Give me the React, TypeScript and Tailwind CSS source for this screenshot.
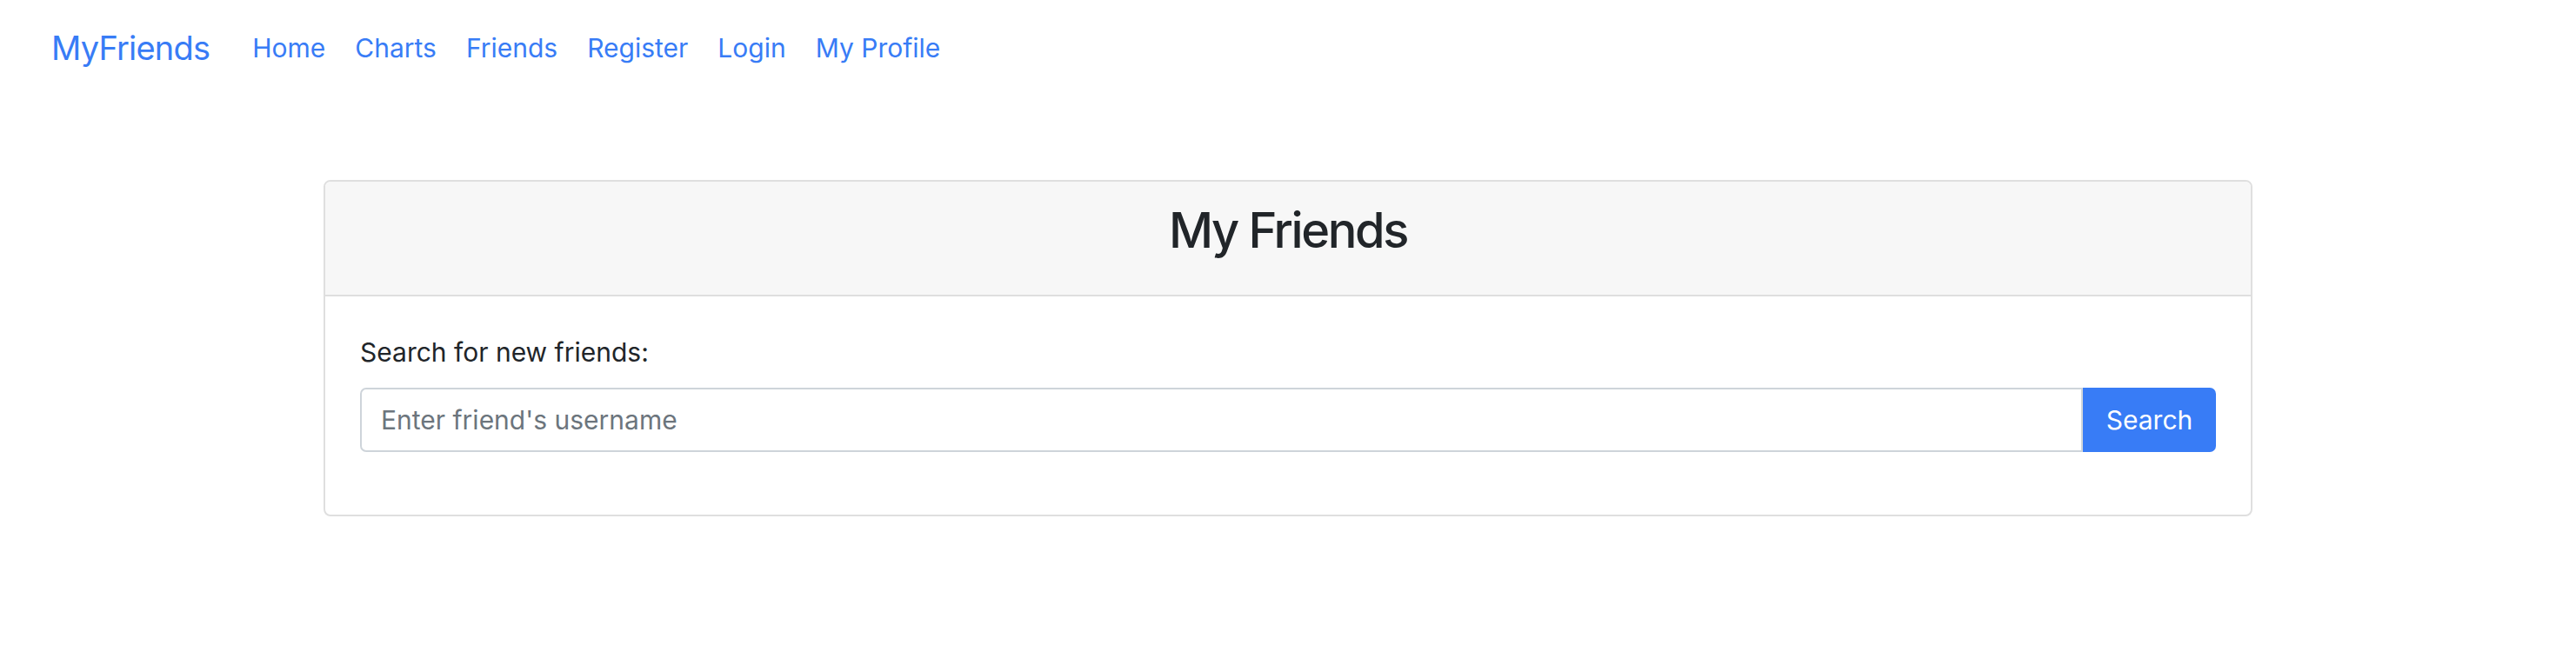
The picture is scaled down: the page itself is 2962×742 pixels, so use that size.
import React from "react";

const links = ["Home", "Charts", "Friends", "Register", "Login", "My Profile"];

export default function App() {
  return (
    <div className="min-h-[742px] w-full bg-white text-[#212529] font-['Inter','Liberation_Sans',sans-serif]">
      <nav className="flex h-[110px] items-center pl-[59px]">
        <a className="mr-[49px] text-[38px] leading-[57px] tracking-[-0.8px] text-[#387cf6]" href="#">
          MyFriends
        </a>
        <ul className="flex items-center gap-[34px]">
          {links.map((l) => (
            <li key={l}>
              <a className="text-[30px] leading-[45px] text-[#387cf6]" href="#">
                {l}
              </a>
            </li>
          ))}
        </ul>
      </nav>

      <div className="mx-auto mt-[97px] w-[2218px] overflow-hidden rounded-[8px] border-2 border-[#dfdfdf]">
        <div className="border-b-2 border-[#dfdfdf] bg-[#f7f7f7] pb-[40px] pt-[23px] text-center">
          <h3 className="text-[56px] font-medium leading-[67px] tracking-[-2.4px] text-[#212529]">My Friends</h3>
        </div>
        <div className="px-[40px] pb-[72px] pt-[42px]">
          <label className="mb-[18px] block text-[30px] leading-[45px] text-[#212529]">
            Search for new friends:
          </label>
          <div className="flex h-[74px]">
            <input
              type="text"
              placeholder="Enter friend's username"
              className="h-full flex-1 rounded-l-[7px] border-2 border-[#ced4da] pl-[22px] text-[30px] text-[#212529] outline-none placeholder:text-[#6c757d]"
            />
            <button className="h-full w-[153px] rounded-r-[7px] bg-[#387cf6] text-[30px] text-white">
              Search
            </button>
          </div>
        </div>
      </div>
    </div>
  );
}
